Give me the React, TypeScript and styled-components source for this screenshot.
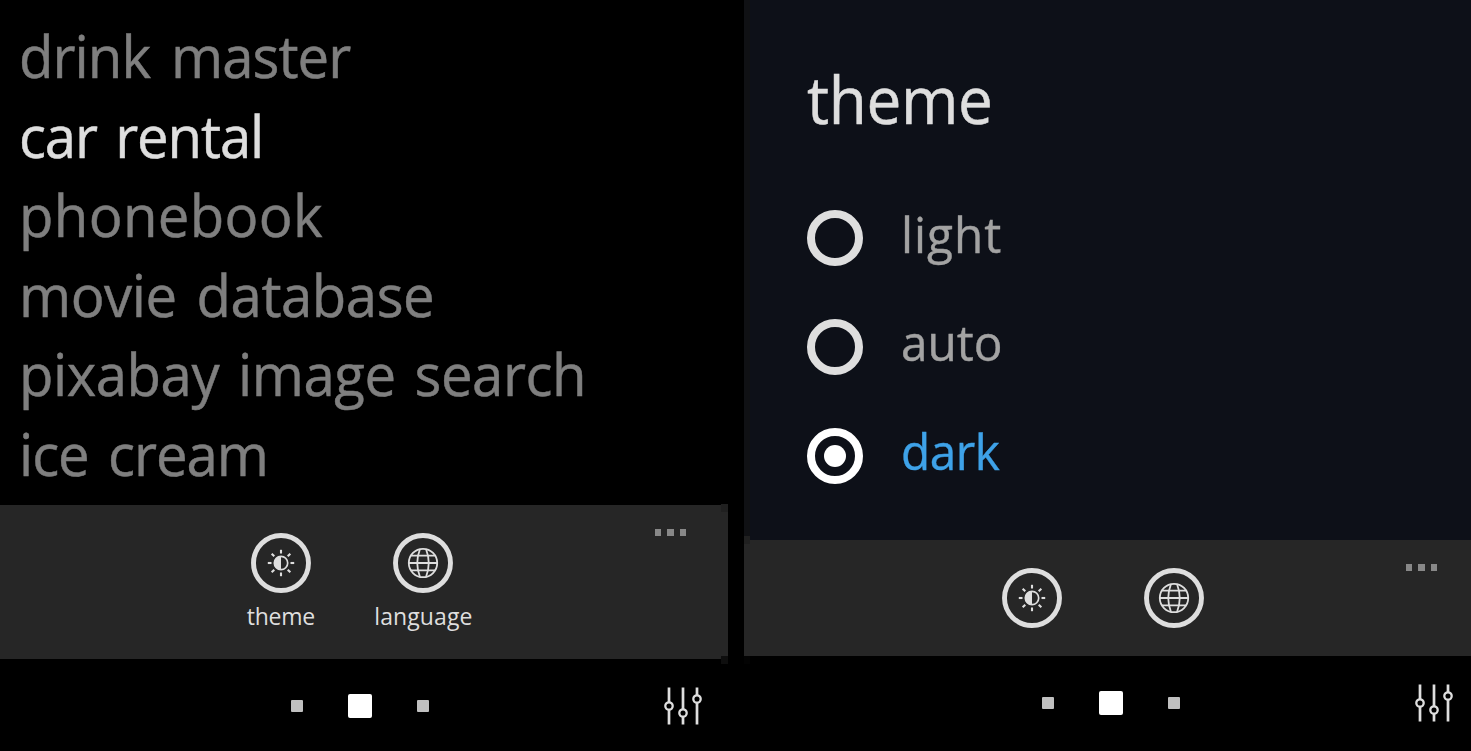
import React from "react";
import styled, { createGlobalStyle } from "styled-components";

const Global = createGlobalStyle`
  * { box-sizing: border-box; }
  body { margin: 0; background: #000; font-family: "Open Sans", "Noto Sans", sans-serif; }
`;

const Screens = styled.main`
  display: grid;
  grid-template-columns: 728px 727px;
  column-gap: 16px;
  width: 1471px;
  height: 751px;
  background: #000;
  overflow: hidden;
`;

const Screen = styled.section`
  display: flex;
  flex-direction: column;
  height: 751px;
`;

const AppList = styled.ul`
  flex: none;
  list-style: none;
  margin: 0;
  padding: 16.4px 0 0 19px;
  height: 505px;
`;

const AppItem = styled.li<{ $active?: boolean; $track: number; $gap: number }>`
  height: 79.5px;
  line-height: 79.5px;
  font-size: 59px;
  white-space: nowrap;
  color: ${(p) => (p.$active ? "#dedede" : "#7f7f7f")};
  -webkit-text-stroke: 0.5px currentColor;
  letter-spacing: ${(p) => p.$track}px;
  word-spacing: ${(p) => p.$gap}px;
  transform: scaleX(0.955);
  transform-origin: left;
`;

const Settings = styled.div`
  flex: none;
  height: 540px;
  padding: 50px 0 0 57px;
  border-left: 6px solid #101114;
  background: #0d1018;
`;

const Heading = styled.h1`
  margin: 0 0 34px;
  height: 100px;
  line-height: 98px;
  font-size: 65px;
  font-weight: 400;
  color: #dedede;
  -webkit-text-stroke: 0.5px currentColor;
  letter-spacing: -0.4px;
  transform: scaleX(0.955);
  transform-origin: left;
`;

const Option = styled.div`
  display: flex;
  align-items: center;
  gap: 38px;
  height: 108.7px;
`;

const Radio = styled.span<{ $checked?: boolean }>`
  display: grid;
  place-items: center;
  width: 56px;
  height: 56px;
  border: 8px solid ${(p) => (p.$checked ? "#fff" : "#dedede")};
  border-radius: 50%;
`;

const RadioDot = styled.span`
  width: 22px;
  height: 22px;
  border-radius: 50%;
  background: #fff;
`;

const OptionLabel = styled.span<{ $checked?: boolean; $track: number }>`
  font-size: 50px;
  line-height: 60px;
  padding-bottom: 9.5px;
  color: ${(p) => (p.$checked ? "#3ea2e8" : "#a3a3a3")};
  -webkit-text-stroke: 0.4px currentColor;
  letter-spacing: ${(p) => p.$track}px;
  transform: scaleX(0.955);
  transform-origin: left;
`;

const AppBar = styled.div<{ $height: number; $inset: number; $side: "left" | "right" }>`
  flex: none;
  position: relative;
  display: grid;
  grid-template-columns: 209.5px 142.6px 142.6px 1fr;
  height: ${(p) => p.$height}px;
  padding: 28px 0 0 ${(p) => p.$inset}px;
  background: #262626;

  &::before,
  &::after {
    content: "";
    position: absolute;
    ${(p) => p.$side}: 0;
    width: ${(p) => (p.$side === "left" ? 6 : 7)}px;
    height: 8px;
  }
  &::before {
    top: ${(p) => (p.$side === "left" ? -4 : -1)}px;
    background: #202020;
  }
  &::after {
    bottom: ${(p) => (p.$side === "left" ? -8 : -5)}px;
    background: ${(p) => (p.$side === "left" ? "#030303" : "#0e0e0e")};
  }
`;

const BarButton = styled.div`
  display: flex;
  flex-direction: column;
  align-items: center;
`;

const BarLabel = styled.span<{ $track: number }>`
  margin-top: 6px;
  font-size: 23px;
  line-height: 34px;
  color: #dedede;
  letter-spacing: ${(p) => p.$track}px;
`;

const More = styled.div`
  display: flex;
  gap: 6px;
  margin: -4px 0 0 160px;
`;

const MoreDot = styled.span`
  width: 6.5px;
  height: 6.5px;
  background: #888;
`;

const Footer = styled.footer<{ $inset: number }>`
  flex: 1;
  display: grid;
  grid-template-columns: 291px 138px 291px;
  align-items: center;
  padding: ${(p) => (p.$inset ? "0 0 1px" : "1px 0 0")};
  padding-left: ${(p) => p.$inset}px;
`;

const Pager = styled.div`
  grid-column: 2;
  display: flex;
  align-items: center;
  justify-content: space-between;
`;

const Page = styled.span<{ $current?: boolean }>`
  width: ${(p) => (p.$current ? 24 : 12)}px;
  height: ${(p) => (p.$current ? 24 : 12)}px;
  border-radius: ${(p) => (p.$current ? 2 : 1)}px;
  background: ${(p) => (p.$current ? "#fff" : "#c0c0c0")};
`;

const Tuning = styled.svg`
  justify-self: end;
  margin-right: 18px;
`;

const apps = [
  { name: "drink master", track: -1, gap: 7.5 },
  { name: "car rental", track: -1.2, gap: 5 },
  { name: "phonebook", track: 0.35, gap: 0 },
  { name: "movie database", track: -0.5, gap: 6 },
  { name: "pixabay image search", track: -0.5, gap: 5 },
  { name: "ice cream", track: -1.1, gap: 6 },
];

const activeApp = "car rental";

const options = [
  { name: "light", track: 1 },
  { name: "auto", track: 0 },
  { name: "dark", track: -0.5, checked: true },
];

function ThemeIcon() {
  return (
    <svg width="60" height="60" viewBox="-30 -30 60 60" fill="none" stroke="#dedede">
      <circle r="27.5" strokeWidth="4.9" />
      <circle r="6.7" strokeWidth="1.7" />
      <path d="M0-7A7 7 0 0 0 0 7Z" fill="#dedede" stroke="none" />
      <g strokeWidth="2.1">
        {[0, 45, 90, 135, 180, 225, 270, 315].map((a) => (
          <path key={a} d="M0-9.5V-13.2" transform={`rotate(${a})`} />
        ))}
      </g>
    </svg>
  );
}

function GlobeIcon() {
  return (
    <svg width="60" height="60" viewBox="-30 -30 60 60" fill="none" stroke="#dedede">
      <circle r="27.5" strokeWidth="4.9" />
      <g strokeWidth="1.8">
        <circle r="14.2" />
        <path d="M-3-14Q-8.5 0-3 14M3-14Q8.5 0 3 14" />
        <path d="M-14.3 0H14.3M-12.3-7.3H12.3M-12.3 7.3H12.3" />
      </g>
    </svg>
  );
}

function Sliders() {
  return (
    <Tuning width="38" height="38" viewBox="0 0 38 38" fill="none" stroke="#dedede" strokeWidth="2.7">
      <path d="M5 .5V15M5 23V37.5M19 .5V22M19 30V37.5M33 .5V8M33 16V37.5" />
      <circle cx="5" cy="19" r="3.7" strokeWidth="2.3" />
      <circle cx="19" cy="26" r="3.7" strokeWidth="2.3" />
      <circle cx="33" cy="12" r="3.7" strokeWidth="2.3" />
    </Tuning>
  );
}

interface BarProps {
  height: number;
  side: "left" | "right";
  labels?: boolean;
  inset?: number;
}

function Bar({ height, side, labels, inset = 0 }: BarProps) {
  return (
    <AppBar $height={height} $inset={inset} $side={side}>
      <span />
      <BarButton>
        <ThemeIcon />
        {labels && <BarLabel $track={-0.3}>theme</BarLabel>}
      </BarButton>
      <BarButton>
        <GlobeIcon />
        {labels && <BarLabel $track={0.1}>language</BarLabel>}
      </BarButton>
      <More>
        <MoreDot />
        <MoreDot />
        <MoreDot />
      </More>
    </AppBar>
  );
}

function Navigation({ inset = 0 }: { inset?: number }) {
  return (
    <Footer $inset={inset}>
      <Pager>
        <Page />
        <Page $current />
        <Page />
      </Pager>
      <Sliders />
    </Footer>
  );
}

export default function App() {
  return (
    <>
      <Global />
      <Screens>
        <Screen>
          <AppList>
            {apps.map((a) => (
              <AppItem key={a.name} $active={a.name === activeApp} $track={a.track} $gap={a.gap}>
                {a.name}
              </AppItem>
            ))}
          </AppList>
          <Bar height={154} side="right" labels />
          <Navigation />
        </Screen>
        <Screen>
          <Settings>
            <Heading>theme</Heading>
            {options.map((o) => (
              <Option key={o.name}>
                <Radio $checked={o.checked}>{o.checked && <RadioDot />}</Radio>
                <OptionLabel $checked={o.checked} $track={o.track}>
                  {o.name}
                </OptionLabel>
              </Option>
            ))}
          </Settings>
          <Bar height={116} side="left" inset={7} />
          <Navigation inset={7} />
        </Screen>
      </Screens>
    </>
  );
}
